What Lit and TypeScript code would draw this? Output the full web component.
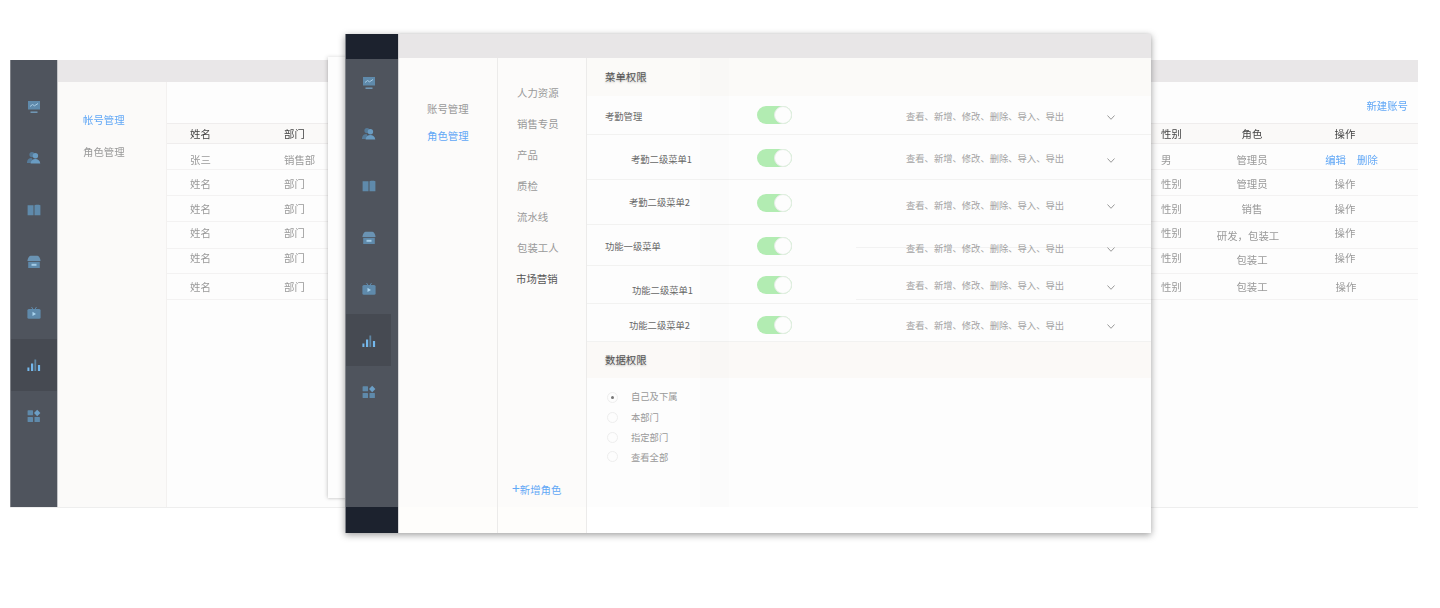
import { LitElement, html, css, svg } from "lit";
import { customElement } from "lit/decorators.js";

const I = "#5f8aab";
const L = "#74b8ec";
const icons = [
  svg`<path fill="${I}" d="M1 1h12v8.500H1z"/><path fill="none" stroke="#a9cbe3" stroke-width="1" d="M3 6.500l2.500-2 2 1.300L11 3.500"/><path fill="#7fb4da" d="M3.500 11.600h7v1.100h-7z"/>`,
  svg`<circle cx="5" cy="3.600" r="2.600" fill="#557a98"/><path fill="#557a98" d="M0 11c.4-2.600 2-4 4.500-4l2 3-1 2H0z"/><circle cx="8.400" cy="4.800" r="2.700" fill="#6a9cc2"/><path fill="#6a9cc2" d="M3.600 12.600c.3-3 2.200-4.600 4.800-4.600s4.500 1.600 4.900 4.600z"/>`,
  svg`<path fill="${I}" d="M.6 2.200h5.900v10H.6zM7.500 2.200c1.800-.5 3.900-.5 5.900 0v10H7.500z"/>`,
  svg`<path fill="#6a93b3" d="M3.500 .8h7c1.500 0 2.800 2.600 3.100 5.200H.4C.7 3.400 2 .8 3.500 .8z"/><path fill="${I}" d="M1.200 6.800h11.600V13H1.200z"/><path fill="#a3cbe6" d="M4.500 8.800h5v2h-5z"/>`,
  svg`<path stroke="${I}" stroke-width="1" d="M4.500 1l1.500 2.200M9.500 1L8 3.200"/><rect x=".4" y="3" width="13.200" height="9.800" rx="1.500" fill="${I}"/><path fill="#a9d3ee" d="M5.500 5.700l3.500 2.200-3.500 2.200z"/>`,
  svg`<path fill="${L}" d="M.4 9.500h2V13h-2z"/><path fill="${L}" d="M4 5.500h2.200V13H4z"/><path fill="#5f86a3" d="M7.400 1.500h1.800V13H7.400z"/><path fill="${L}" d="M10.900 7h2.200v6h-2.200z"/>`,
  svg`<rect x=".6" y="1.300" width="5.400" height="5" rx=".6" fill="${I}"/><rect x=".6" y="8" width="5.400" height="5" rx=".6" fill="${I}"/><rect x="7.500" y="8" width="5.400" height="5" rx=".6" fill="${I}"/><path fill="#6c9fc6" d="M10.200 .8l3.200 3.200-3.200 3.200L7 4z"/>`,
];
const icon = (i: number) => html`<svg class="ico" viewBox="0 0 14 14">${icons[i]}</svg>`;

const header = ["姓名", "部门", "性别", "角色", "操作"];
const tops = [123, 144, 170, 196, 222, 249, 274, 300];
const backRows: { n: string; d: string; s: string; r: string; ry: number; rc?: string; o: string; y: number; oc?: string }[] = [
  { n: "张三", d: "销售部", s: "男", r: "管理员", ry: 159.5, o: "", y: 159.5 },
  { n: "姓名", d: "部门", s: "性别", r: "管理员", ry: 184, o: "操作", y: 184 },
  { n: "姓名", d: "部门", s: "性别", r: "销售", ry: 209, o: "操作", y: 209 },
  { n: "姓名", d: "部门", s: "性别", r: "研发，包装工", ry: 235.5, rc: "left", o: "操作", y: 233 },
  { n: "姓名", d: "部门", s: "性别", r: "包装工", ry: 260, o: "操作", y: 258 },
  { n: "姓名", d: "部门", s: "性别", r: "包装工", ry: 287, o: "操作", y: 287, oc: "nudge" },
];

const perms = [
  { label: "考勤管理", x: 605, top: 96, h: 39, ly: 116, ty: 115, ay: 116, cy: 117 },
  { label: "考勤二级菜单1", x: 631, top: 135, h: 45, ly: 159, ty: 158, ay: 158, cy: 160 },
  { label: "考勤二级菜单2", x: 629, top: 180, h: 45, ly: 202, ty: 203, ay: 205, cy: 206 },
  { label: "功能一级菜单", x: 605, top: 225, h: 41, ly: 245.5, ty: 246, ay: 248, cy: 249 },
  { label: "功能二级菜单1", x: 632, top: 266, h: 38, ly: 290, ty: 285, ay: 285, cy: 287 },
  { label: "功能二级菜单2", x: 629, top: 304, h: 38, ly: 324.5, ty: 325, ay: 325, cy: 326 },
];
const radios = [
  { t: "自己及下属", ry: 397, ly: 396, on: true },
  { t: "本部门", ry: 417, ly: 417, on: false },
  { t: "指定部门", ry: 437, ly: 437, on: false },
  { t: "查看全部", ry: 456, ly: 457, on: false },
];
const groups = ["人力资源", "销售专员", "产品", "质检", "流水线", "包装工人", "市场营销"];

@customElement("app-root")
export class AppRoot extends LitElement {
  static styles = css`
    :host { display: block; width: 1440px; height: 608px; position: relative; background: #fff; overflow: hidden;
      font-family: "Noto Sans CJK SC", "Liberation Sans", sans-serif; font-size: 10.4px; color: #999; }
    .stage { width: 1440px; height: 608px; position: relative; filter: blur(0.4px); }
    .win { position: absolute; display: flex; }
    .back { left: 10px; top: 60px; width: 1408px; height: 447px; background: #fdfdfd; box-shadow: 0 1px 0 #eee; }
    .sheet { position: absolute; left: 328px; top: 57px; width: 30px; height: 441px; background: #fdfdfd; box-shadow: -1px 0 4px rgba(0,0,0,.16), 0 1px 2px rgba(0,0,0,.08); }
    .front { left: 345px; top: 34px; width: 806px; height: 499px; background: #fff; box-shadow: 0 2px 7px rgba(0,0,0,.38); }
    .side { background: #4f545d; flex: none; display: flex; flex-direction: column; }
    .back .side { width: 48px; box-sizing: border-box; border-left: 1px solid #7f8288; border-right: 1px solid #c4c5c8; padding-top: 21px; }
    .front .side { width: 54px; box-sizing: border-box; border-left: 1px solid #7f8288; border-right: 1px solid #d8d8da; }
    .cap { height: 25px; background: #1c222e; flex: none; }
    .mid { flex: 1; margin-top: -3px; min-height: 0; }
    .foot { height: 26px; background: #1c222e; flex: none; }
    .item { height: 51.6px; display: flex; align-items: center; justify-content: center; box-sizing: border-box; }
    .front .item { width: 45px; padding-top: 2px; }
    .item.on { background: #464a52; }
    .ico { width: 14px; height: 14px; display: block; }
    .col { flex: 1; min-width: 0; display: flex; flex-direction: column; }
    .bar { height: 22px; background: #e9e7e8; flex: none; }
    .front .bar { height: 24px; background: #e8e6e7; box-shadow: 0 0 3px rgba(0,0,0,.08); }
    .body { flex: 1; min-height: 0; display: flex; }
    .snav { width: 109px; flex: none; background: #fbfaf9; border-right: 1px solid #f3f1f0; box-sizing: border-box; padding: 31px 0 0 25px; }
    .snav div { height: 32px; line-height: 14px; }
    .blue { color: #62a8f6; }
    .tools { height: 41px; display: flex; justify-content: flex-end; padding: 17px 10px 0 0; box-sizing: border-box; line-height: 14px; }
    .row { display: grid; grid-template-columns: 94px 877px 41px 100px 86px 1fr; padding-left: 23px; box-sizing: border-box; border-bottom: 1px solid #f3f2f2; align-items: start; line-height: 14px; white-space: nowrap; }
    .row.head { background: #faf9f8; color: #444; border-top: 1px solid #efeded; border-bottom: 1px solid #efeded; }
    .mc { text-align: center; }
    .left { padding-right: 8px; }
    .acts { display: flex; gap: 11px; justify-content: center; padding-left: 13px; }
    .nudge { padding-left: 2px; }
    .c1, .c2 { flex: none; box-sizing: border-box; background: linear-gradient(#fcfbfa 449px, #fefdfb 449px); border-right: 1px solid #ecebea; display: flex; flex-direction: column; }
    .c1 { width: 99px; padding: 44px 0 0 28px; }
    .c1 div { height: 27px; line-height: 14px; }
    .c2 { width: 89px; padding: 28px 0 0 19px; }
    .c2 .g { height: 31px; line-height: 14px; }
    .c2 .g.cur { color: #555; margin-left: -1px; }
    .add { margin: auto 0 36px -5px; line-height: 14px; white-space: nowrap; }
    .add b { font-weight: 400; font-size: 14px; }
    .main { flex: 1; min-width: 0; height: 449px; background: #fdfdfd; position: relative; font-size: 9.3px; line-height: 14px; color: #a3a3a3; }
    .sec { height: 38px; background: #fbfaf8; font-size: 10.4px; color: #555; padding: 12px 0 0 18px; box-sizing: border-box; text-shadow: 0 1px 2px rgba(0,0,0,.28); }
    .sec.d { height: 36px; padding-top: 11px; background: #fbf9f7; }
    .p { display: grid; grid-template-columns: 170px 149px 201px 1fr; box-sizing: border-box; border-bottom: 1px solid #f2f2f1; align-items: start; white-space: nowrap; }
    .p .l { color: #666; }
    .tg { width: 35px; height: 18px; border-radius: 9px; background: #b2ecb2; position: relative; display: block; }
    .tg::after { content: ""; position: absolute; right: 0; top: 0; width: 18px; height: 18px; box-sizing: border-box; border-radius: 50%; background: #fdfdfd; border: 1px solid #e4ede4; }
    .chev { width: 8px; height: 5px; display: block; }
    .rl { padding: 10px 0 0 20px; color: #999; }
    .r { display: grid; grid-template-columns: 24px 1fr; align-items: start; height: 20px; }
    .r:nth-child(3) { height: 19px; }
    .dot { width: 11px; height: 11px; border: 1px solid #eeeeee; border-radius: 50%; box-sizing: border-box; background: #fdfdfd; display: flex; align-items: center; justify-content: center; }
    .dot.on i { display: block; width: 3px; height: 3px; border-radius: 50%; background: #777; }
    .stripe { position: absolute; left: 113px; top: 0; width: 29px; height: 449px; background: rgba(90,80,80,.012); }
    .ghost { position: absolute; left: 856px; width: 295px; height: 1px; background: rgba(120,120,120,.08); }
  `;

  private side(active: number) {
    return [0, 1, 2, 3, 4, 5, 6].map((i) => html`<div class="item ${i === active ? "on" : ""}">${icon(i)}</div>`);
  }
  private cell(content: unknown, y: number, top: number, cls = "") {
    return html`<div class=${cls} style="margin-top:${y - 7 - top}px">${content}</div>`;
  }

  render() {
    return html`<div class="stage">
      <section class="win back">
        <aside class="side">${this.side(5)}</aside>
        <div class="col">
          <div class="bar"></div>
          <div class="body">
            <nav class="snav"><div class="blue">帐号管理</div><div>角色管理</div></nav>
            <div class="col">
              <div class="tools"><span class="blue">新建账号</span></div>
              <div class="row head" style="height:${tops[1] - tops[0]}px">
                ${header.map((h, i) => this.cell(h, 133, 123, i > 2 ? "mc" : ""))}
              </div>
              ${backRows.map((r, i) => {
                const t = tops[i + 1];
                return html`<div class="row" style="height:${tops[i + 2] - t}px">
                  ${this.cell(r.n, r.y, t)}${this.cell(r.d, r.y, t)}${this.cell(r.s, r.y, t)}
                  ${this.cell(r.r, r.ry, t, "mc " + (r.rc ?? ""))}
                  ${r.o
                    ? this.cell(r.o, r.y, t, "mc " + (r.oc ?? ""))
                    : this.cell(html`<span class="blue">编辑</span><span class="blue">删除</span>`, r.y, t, "acts")}
                </div>`;
              })}
            </div>
          </div>
        </div>
      </section>
      <div class="sheet"></div>
      <section class="win front">
        <aside class="side">
          <div class="cap"></div>
          <div class="mid">${this.side(5)}</div>
          <div class="foot"></div>
        </aside>
        <div class="col">
          <div class="bar"></div>
          <div class="body">
            <nav class="c1"><div>账号管理</div><div class="blue">角色管理</div></nav>
            <nav class="c2">
              ${groups.map((g, i) => html`<div class="g ${i === 6 ? "cur" : ""}">${g}</div>`)}
              <div class="add blue"><b>+</b>新增角色</div>
            </nav>
            <main class="main">
              <div class="sec">菜单权限</div>
              ${perms.map(
                (p) => html`<div class="p" style="height:${p.h}px">
                  ${this.cell(html`<span style="padding-left:${p.x - 587}px">${p.label}</span>`, p.ly, p.top, "l")}
                  <div style="margin-top:${p.ty - 9 - p.top}px"><span class="tg"></span></div>
                  ${this.cell("查看、新增、修改、删除、导入、导出", p.ay, p.top)}
                  <div style="margin-top:${p.cy - 2.5 - p.top}px">
                    <svg class="chev" viewBox="0 0 8 5"><path d="M.5.5L4 4.300 7.500.5" fill="none" stroke="#999" stroke-width="1"/></svg>
                  </div>
                </div>`
              )}
              <div class="sec d">数据权限</div>
              <div class="rl">
                ${radios.map(
                  (r, i) => html`<div class="r">
                    <div style="margin-top:${r.ry - 5.5 - (388 + [0, 20, 40, 59][i])}px"><div class="dot ${r.on ? "on" : ""}"><i></i></div></div>
                    ${this.cell(r.t, r.ly, 388 + [0, 20, 40, 59][i])}
                  </div>`
                )}
              </div>
              <div class="stripe"></div>
            </main>
          </div>
        </div>
      </section>
      <div class="ghost" style="top:247px"></div>
      <div class="ghost" style="top:299px"></div>
    </div>`;
  }
}
